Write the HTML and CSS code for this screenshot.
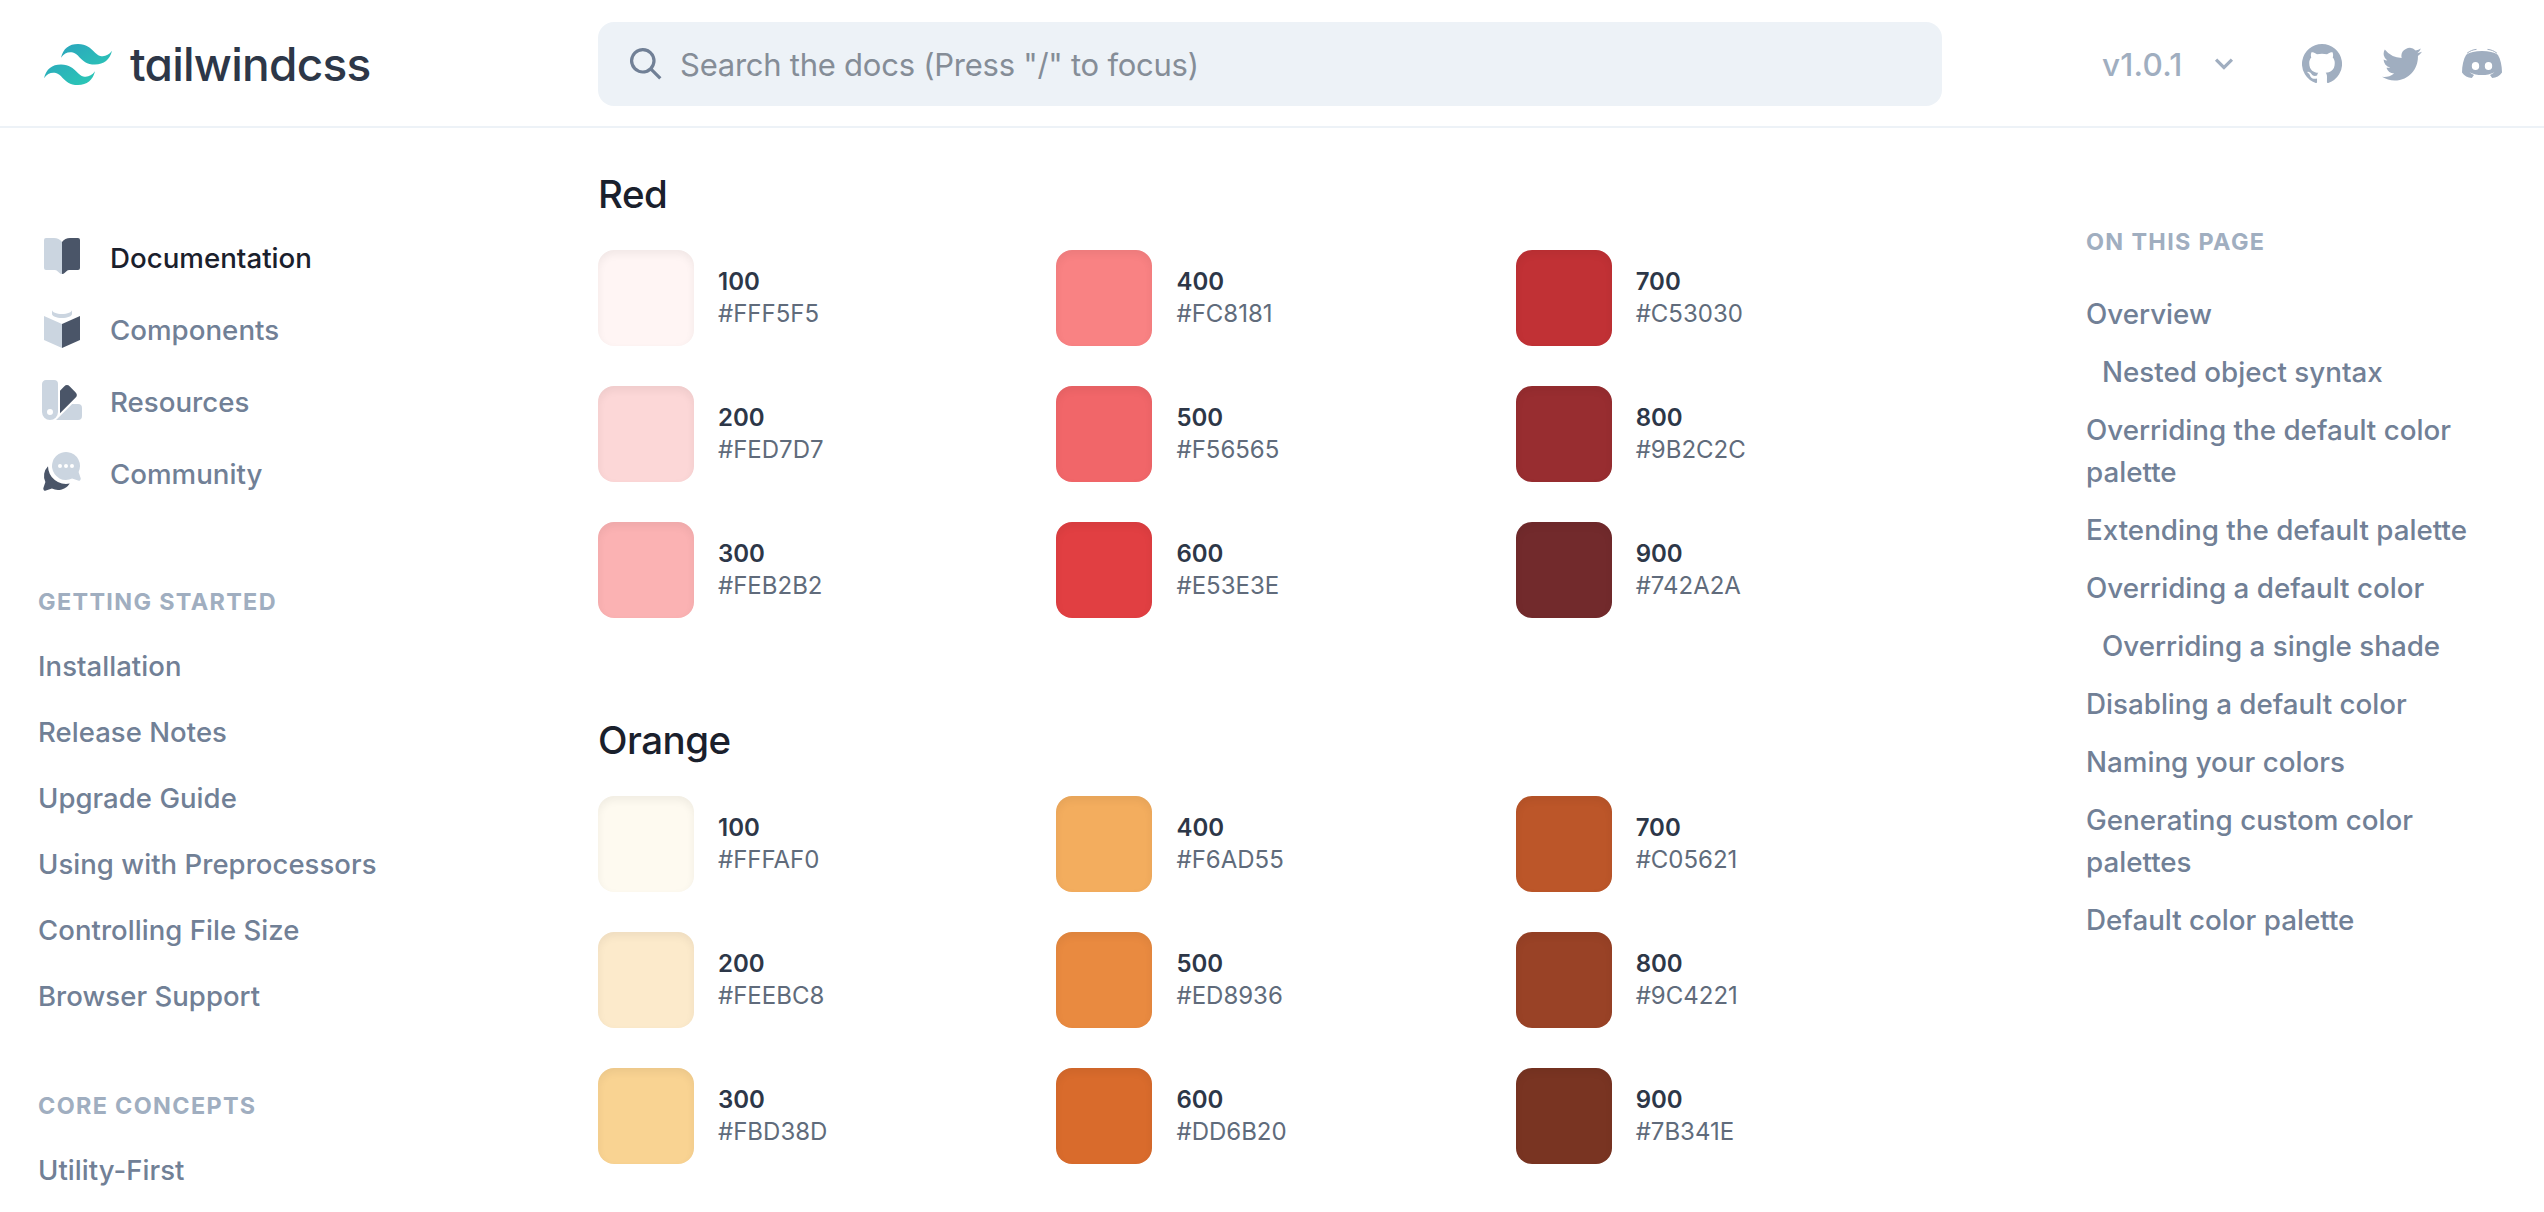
FILE: index.html
```html
<!DOCTYPE html>
<html lang="en">
<head>
<meta charset="utf-8">
<title>Customizing Colors - Tailwind CSS</title>
<link rel="stylesheet" href="styles.css">
</head>
<body>
<header class="header">
  <a class="logo">
    <svg class="logo-mark" viewBox="0 0 54 32.4" preserveAspectRatio="none">
      <defs><linearGradient id="wave" x1="0" y1="0" x2="1" y2="1"><stop offset="0" stop-color="#2b9fbe"/><stop offset="1" stop-color="#2bcfb4"/></linearGradient></defs>
      <path fill="url(#wave)" d="M27 0c-7.2 0-11.7 3.6-13.5 10.8 2.7-3.6 5.85-4.95 9.45-4.05 2.054.513 3.522 2.004 5.147 3.653C30.744 13.09 33.808 16.2 40.5 16.2c7.2 0 11.7-3.6 13.5-10.8-2.7 3.6-5.85 4.95-9.45 4.05-2.054-.513-3.522-2.004-5.147-3.653C36.756 3.11 33.692 0 27 0zM13.5 16.2C6.3 16.2 1.8 19.8 0 27c2.7-3.6 5.85-4.95 9.45-4.05 2.054.514 3.522 2.004 5.147 3.653C17.244 29.29 20.308 32.4 27 32.4c7.2 0 11.7-3.6 13.5-10.8-2.7 3.6-5.85 4.95-9.45 4.05-2.054-.513-3.522-2.004-5.147-3.653C23.256 19.31 20.192 16.2 13.5 16.2z"/>
    </svg>
    <span class="logo-text">tailwindcss</span>
  </a>
  <div class="search">
    <svg class="search-icon" viewBox="0 0 20 20"><path d="M12.9 14.32a8 8 0 1 1 1.41-1.41l5.35 5.33-1.42 1.42-5.33-5.34zM8 14A6 6 0 1 0 8 2a6 6 0 0 0 0 12z"/></svg>
    <span class="search-text">Search the docs (Press "/" to focus)</span>
  </div>
  <div class="tools">
    <span class="version">v1.0.1</span>
    <svg class="chevron" viewBox="0 0 20 20"><path d="M9.293 12.95l.707.707L15.657 8l-1.414-1.414L10 10.828 5.757 6.586 4.343 8z"/></svg>
    <nav class="social">
      <svg viewBox="0 0 20 20"><path d="M10 0a10 10 0 0 0-3.16 19.49c.5.1.68-.22.68-.48l-.01-1.7c-2.78.6-3.37-1.34-3.37-1.34-.46-1.16-1.11-1.47-1.11-1.47-.9-.62.07-.6.07-.6 1 .07 1.53 1.03 1.53 1.03.9 1.52 2.34 1.08 2.91.83.1-.65.35-1.09.63-1.34-2.22-.25-4.55-1.11-4.55-4.94 0-1.1.39-1.99 1.03-2.69a3.6 3.6 0 0 1 .1-2.64s.84-.27 2.75 1.02a9.58 9.58 0 0 1 5 0c1.91-1.3 2.75-1.02 2.75-1.02.55 1.37.2 2.4.1 2.64.64.7 1.03 1.6 1.03 2.69 0 3.84-2.34 4.68-4.57 4.93.36.31.68.92.68 1.85l-.01 2.75c0 .26.18.58.69.48A10 10 0 0 0 10 0"/></svg>
      <svg viewBox="0 0 20 20"><path d="M6.29 18.25c7.55 0 11.67-6.25 11.67-11.67v-.53c.8-.59 1.49-1.3 2.04-2.13-.75.33-1.54.55-2.36.65a4.12 4.12 0 0 0 1.8-2.27c-.8.48-1.68.81-2.6 1a4.1 4.1 0 0 0-7 3.74 11.65 11.65 0 0 1-8.45-4.3 4.1 4.1 0 0 0 1.27 5.49C2.01 8.2 1.37 8.03.8 7.7v.05a4.1 4.1 0 0 0 3.3 4.03 4.1 4.1 0 0 1-1.86.07 4.1 4.1 0 0 0 3.83 2.85A8.23 8.23 0 0 1 0 16.4a11.62 11.62 0 0 0 6.29 1.84"/></svg>
      <svg viewBox="0 0 40 40"><path fill-rule="evenodd" d="M4.200 10.700C8 8 13 6.900 20 6.900S32 8 35.800 10.700C38.500 15 40 21.500 40 28.500c-2.200 3.500-5.800 5.300-9.800 5.500l-2.200-3c1.600-.6 3.200-1.600 4.500-2.800C28.500 30.300 24.500 31 20 31s-8.500-.7-12.500-2.800C8.800 29.400 10.400 30.400 12 31l-2.200 3C5.800 33.800 2.200 32 0 28.500 0 21.500 1.500 15 4.200 10.700zM13.500 18a3.700 4 0 1 0 0 8 3.700 4 0 1 0 0-8zM26.500 18a3.700 4 0 1 0 0 8 3.700 4 0 1 0 0-8z"/><path class="ear" d="M5 9.300C8 6.800 11 5.700 14.500 5.400M35 9.300C32 6.800 29 5.700 25.500 5.400"/></svg>
    </nav>
  </div>
</header>
<div class="page">
  <aside class="sidebar">
    <nav class="main-nav">
      <a class="nav-item active"><svg viewBox="0 0 24 24"><path class="light" d="M12 21a2 2 0 0 1-1.410-.590l-.830-.820A2 2 0 0 0 8.340 19H4a1 1 0 0 1-1-1V4a1 1 0 0 1 1-1h4a5 5 0 0 1 4 2v16z"/><path class="dark" d="M12 21V5a5 5 0 0 1 4-2h4a1 1 0 0 1 1 1v14a1 1 0 0 1-1 1h-4.340a2 2 0 0 0-1.420.590l-.830.820A2 2 0 0 1 12 21z"/></svg><span>Documentation</span></a>
      <a class="nav-item"><svg viewBox="0 0 24 24"><path class="light" d="M3 6l9 4v12l-9-4V6zm14-3v2c0 1.100-2.240 2-5 2s-5-.9-5-2V3c0 1.100 2.240 2 5 2s5-.9 5-2z"/><path class="dark" d="M21 6l-9 4v12l9-4V6z"/></svg><span>Components</span></a>
      <a class="nav-item"><svg viewBox="0 0 24 24"><path class="light" d="M9 22c.190-.140.370-.3.540-.460L17.070 14H20a2 2 0 0 1 2 2v4a2 2 0 0 1-2 2H9zM4 2h4a2 2 0 0 1 2 2v14a4 4 0 1 1-8 0V4c0-1.100.9-2 2-2zm2 17.500a1.500 1.500 0 1 0 0-3 1.500 1.500 0 0 0 0 3z"/><path class="dark" d="M11 18.660V7.340l2.070-2.070a2 2 0 0 1 2.830 0l2.830 2.830a2 2 0 0 1 0 2.830L11 18.660z"/></svg><span>Resources</span></a>
      <a class="nav-item"><svg viewBox="0 0 24 24"><path class="dark" d="M15.880 17.800a7 7 0 0 1-8.920 2.500l-3 1.010a1 1 0 0 1-1.270-1.260l1-3.010A6.970 6.970 0 0 1 5 9.100a9 9 0 0 0 10.880 8.700z"/><path class="light" d="M20.300 12.040l1.010 3a1 1 0 0 1-1.260 1.270l-3.010-1a7 7 0 1 1 3.270-3.270zM11 10a1 1 0 1 0 0-2 1 1 0 0 0 0 2zm3 0a1 1 0 1 0 0-2 1 1 0 0 0 0 2zm3 0a1 1 0 1 0 0-2 1 1 0 0 0 0 2z"/></svg><span>Community</span></a>
    </nav>
    <section class="nav-group">
      <h5>Getting Started</h5>
      <a>Installation</a><a>Release Notes</a><a>Upgrade Guide</a><a>Using with Preprocessors</a><a>Controlling File Size</a><a>Browser Support</a>
    </section>
    <section class="nav-group">
      <h5>Core Concepts</h5>
      <a>Utility-First</a>
    </section>
  </aside>
  <main class="content">
    <section class="palette">
      <h3>Red</h3>
      <div class="shades">
        <div class="shade"><i style="background:#FFF5F4"></i><p><b>100</b><span>#FFF5F5</span></p></div>
        <div class="shade"><i style="background:#FCD7D7"></i><p><b>200</b><span>#FED7D7</span></p></div>
        <div class="shade"><i style="background:#FBB2B3"></i><p><b>300</b><span>#FEB2B2</span></p></div>
        <div class="shade"><i style="background:#F98283"></i><p><b>400</b><span>#FC8181</span></p></div>
        <div class="shade"><i style="background:#F16669"></i><p><b>500</b><span>#F56565</span></p></div>
        <div class="shade"><i style="background:#E13F42"></i><p><b>600</b><span>#E53E3E</span></p></div>
        <div class="shade"><i style="background:#C13135"></i><p><b>700</b><span>#C53030</span></p></div>
        <div class="shade"><i style="background:#982D30"></i><p><b>800</b><span>#9B2C2C</span></p></div>
        <div class="shade"><i style="background:#722A2C"></i><p><b>900</b><span>#742A2A</span></p></div>
      </div>
    </section>
    <section class="palette">
      <h3>Orange</h3>
      <div class="shades">
        <div class="shade"><i style="background:#FEFAF0"></i><p><b>100</b><span>#FFFAF0</span></p></div>
        <div class="shade"><i style="background:#FCEACB"></i><p><b>200</b><span>#FEEBC8</span></p></div>
        <div class="shade"><i style="background:#F9D392"></i><p><b>300</b><span>#FBD38D</span></p></div>
        <div class="shade"><i style="background:#F3AD5E"></i><p><b>400</b><span>#F6AD55</span></p></div>
        <div class="shade"><i style="background:#E98A40"></i><p><b>500</b><span>#ED8936</span></p></div>
        <div class="shade"><i style="background:#D96B2C"></i><p><b>600</b><span>#DD6B20</span></p></div>
        <div class="shade"><i style="background:#BC5629"></i><p><b>700</b><span>#C05621</span></p></div>
        <div class="shade"><i style="background:#994226"></i><p><b>800</b><span>#9C4221</span></p></div>
        <div class="shade"><i style="background:#793422"></i><p><b>900</b><span>#7B341E</span></p></div>
      </div>
    </section>
  </main>
  <aside class="toc">
    <h5>On this page</h5>
    <a>Overview</a>
    <a class="sub">Nested object syntax</a>
    <a>Overriding the default color palette</a>
    <a>Extending the default palette</a>
    <a>Overriding a default color</a>
    <a class="sub">Overriding a single shade</a>
    <a>Disabling a default color</a>
    <a>Naming your colors</a>
    <a>Generating custom color palettes</a>
    <a>Default color palette</a>
  </aside>
</div>
</body>
</html>
```
FILE: styles.css
```css
* { box-sizing: border-box; margin: 0; padding: 0; }
body {
  height: 1212px;
  overflow: hidden;
  background: #fff;
  font-family: Inter, "Liberation Sans", sans-serif;
  line-height: 1.5;
  color: #1a202c;
}
svg { display: block; flex: none; fill: currentColor; }

.header {
  display: flex;
  align-items: center;
  height: 128px;
  padding-top: 2px;
  border-bottom: 2px solid #edf2f7;
}
.logo { display: flex; align-items: center; width: 598px; padding-left: 44px; }
.logo-mark { width: 68px; height: 41px; }
.logo-text {
  margin-left: 18px;
  font-size: 46px;
  font-weight: 550;
  line-height: 60px;
  letter-spacing: -0.75px;
  color: #2d3748;
  font-feature-settings: "cv11", "ss07";
}
.search {
  display: flex;
  align-items: center;
  width: 1344px;
  height: 84px;
  padding-left: 32px;
  border-radius: 16px;
  background: #edf2f7;
}
.search-icon { width: 32px; height: 32px; color: #718096; }
.search-text { margin-left: 18px; padding-top: 2px; font-size: 31px; letter-spacing: -0.25px; color: #858d97; }
.tools { display: flex; align-items: center; padding-left: 160px; color: #a0aec0; }
.version { width: 106px; padding-top: 1px; font-size: 31.5px; font-weight: 500; letter-spacing: 0.2px; }
.chevron { width: 32px; height: 32px; }
.social { display: flex; gap: 40px; margin-left: 62px; }
.social svg { width: 40px; height: 40px; }
.ear { fill: none; stroke: currentColor; stroke-width: 1; }

.page { display: flex; }
.sidebar { width: 598px; padding: 104px 0 0 38px; }
.main-nav { display: flex; flex-direction: column; gap: 24px; }
.nav-item {
  display: flex;
  align-items: center;
  height: 48px;
  font-size: 27.7px;
  font-weight: 500;
  color: #718096;
}
.nav-item svg { width: 48px; height: 48px; margin-right: 24px; }
.nav-item span { padding-top: 5px; }
.nav-item.active { color: #1a202c; }
.light { fill: #cbd5e0; }
.dark { fill: #4a5568; }

h5 {
  font-size: 23.4px;
  font-weight: 700;
  line-height: 36px;
  letter-spacing: 0.057em;
  text-transform: uppercase;
  color: #a0aec0;
}
.nav-group { display: flex; flex-direction: column; gap: 24px; margin-top: 88px; }
.nav-group h5 { margin-bottom: 1px; }
.nav-group + .nav-group { margin-top: 71px; }
.nav-group a { font-size: 27.5px; font-weight: 500; line-height: 42px; letter-spacing: 0.05px; color: #718096; }

.content { width: 1344px; padding-top: 36px; }
.palette { height: 546px; }
.palette h3 { font-size: 38.5px; font-weight: 500; line-height: 60px; letter-spacing: -0.5px; }
.shades {
  display: grid;
  grid-template: repeat(3, 96px) / 458.45px 459.2px 1fr;
  grid-auto-flow: column;
  row-gap: 40px;
  margin-top: 26px;
}
.shade { display: flex; align-items: center; }
.shade i {
  width: 96px;
  height: 96px;
  border-radius: 16px;
  box-shadow: inset 0 4px 8px rgba(0, 0, 0, 0.06);
}
.shade p { display: flex; flex-direction: column; margin-left: 24px; font-size: 24px; line-height: 32px; }
.shade b { font-weight: 600; color: #2d3748; }
.shade span { color: #606b7b; }

.toc {
  display: flex;
  flex-direction: column;
  gap: 16px;
  width: 602px;
  padding: 96px 60px 0 144px;
}
.toc h5 { margin-bottom: 17px; }
.toc a { font-size: 27.75px; font-weight: 500; line-height: 42px; color: #718096; }
.toc .sub { padding-left: 16px; }
```
